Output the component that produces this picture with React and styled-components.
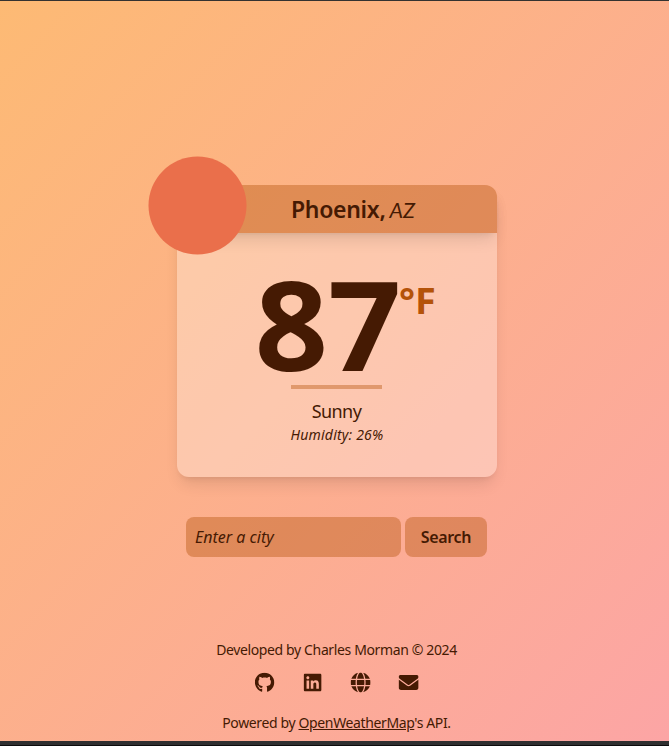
import React from "react";
import styled, { createGlobalStyle } from "styled-components";
import { FaGithub, FaLinkedin, FaGlobe, FaEnvelope } from "react-icons/fa6";

const GlobalStyle = createGlobalStyle`
  *, *::before, *::after { box-sizing: border-box; }
  body { margin: 0; background: #0c0c0d; }
`;

const Page = styled.div`
  display: flex;
  flex-direction: column;
  align-items: center;
  height: 745px;
  padding-top: 184px;
  border-top: 1px solid #343230;
  border-bottom: 4px solid #2f2f30;
  overflow: hidden;
  background: linear-gradient(to bottom right, #fdba74, #fca5a5) padding-box;
  color: #451a03;
  font-family: "Noto Sans", sans-serif;
`;

const Card = styled.section`
  position: relative;
  width: 320px;
  height: 292px;
  margin-left: 5px;
  border-radius: 12px;
  box-shadow: 0 10px 15px -3px rgba(0, 0, 0, 0.1), 0 4px 6px -4px rgba(0, 0, 0, 0.1);
`;

const Sun = styled.div`
  position: absolute;
  top: -29px;
  left: -29px;
  width: 98px;
  height: 98px;
  border-radius: 50%;
  background: #ea6f4b;
  transform: translate(0.5px, 0.6px);
`;

const CardHeader = styled.header`
  position: relative;
  display: flex;
  align-items: center;
  justify-content: center;
  gap: 4px;
  height: 48px;
  padding-left: 32px;
  border-radius: 12px 12px 0 0;
  background: rgba(180, 83, 9, 0.4);
  box-shadow: 0 10px 15px -3px rgba(0, 0, 0, 0.1), 0 4px 6px -4px rgba(0, 0, 0, 0.1);
`;

const City = styled.h1`
  margin: 0;
  font-size: 23px;
  line-height: 32px;
  font-weight: 600;
  letter-spacing: -0.3px;
`;

const Region = styled.span`
  margin-top: 1px;
  font-family: Lato, sans-serif;
  font-size: 21.5px;
  line-height: 28px;
  font-style: italic;
  font-weight: 400;
`;

const CardBody = styled.div`
  display: flex;
  flex-direction: column;
  align-items: center;
  height: 244px;
  padding-top: 32px;
  border-radius: 0 0 12px 12px;
  background: rgba(255, 255, 255, 0.3);
`;

const Temperature = styled.div`
  display: flex;
  align-items: flex-start;
  height: 120px;
  margin-left: 18px;
`;

const Degrees = styled.span`
  font-size: 124.5px;
  line-height: 115px;
  font-weight: 700;
  transform: scaleX(1.03);
  transform-origin: right;
`;

const Unit = styled.span`
  margin: 16px 0 0 -2px;
  color: #b45309;
  font-size: 35px;
  line-height: 40px;
  font-weight: 700;
  transform: scaleX(1.08);
  transform-origin: left;
`;

const Divider = styled.hr`
  width: 91px;
  height: 4px;
  margin: 0 2px 0 0;
  border: 0;
  background: rgba(180, 83, 9, 0.4);
`;

const Condition = styled.p`
  margin: 8px 1px 0 0;
  font-size: 18px;
  line-height: 28px;
  letter-spacing: -0.6px;
`;

const Humidity = styled.p`
  margin: 0;
  font-size: 14px;
  line-height: 20px;
  font-style: italic;
  letter-spacing: 0.2px;
`;

const SearchForm = styled.form`
  display: flex;
  gap: 4px;
  margin: 40px 0 0 4px;
`;

const CityInput = styled.input`
  width: 215px;
  height: 40px;
  padding: 0 9px;
  border: 0;
  border-radius: 8px;
  background: rgba(180, 83, 9, 0.4);
  color: #451a03;
  font: italic 16px/24px "Noto Sans", sans-serif;
  &::placeholder { color: #451a03; opacity: 1; }
`;

const SearchButton = styled.button`
  width: 82px;
  height: 40px;
  padding: 0;
  border: 0;
  border-radius: 8px;
  background: rgba(180, 83, 9, 0.4);
  color: #451a03;
  font: 600 16px/24px "Noto Sans", sans-serif;
  letter-spacing: -0.35px;
`;

const Footer = styled.footer`
  display: flex;
  flex-direction: column;
  align-items: center;
  margin: 83px 0 0 4px;
  font-size: 14px;
  line-height: 20px;
`;

const Note = styled.p`
  margin: 0;
  white-space: nowrap;
  letter-spacing: -0.37px;
`;

const Socials = styled.nav`
  display: flex;
  gap: 28px;
  margin: 12px 0 21px;
`;

const IconLink = styled.a`
  display: flex;
  justify-content: center;
  width: 20px;
  height: 20px;
  color: inherit;
  font-size: 20px;
  transform: translate(-0.4px, 0.5px);
`;

const TextLink = styled.a`
  color: inherit;
  text-decoration: underline;
`;

export default function App() {
  return (
    <>
      <GlobalStyle />
      <Page>
        <Card>
          <CardHeader>
            <City>Phoenix,</City>
            <Region>AZ</Region>
          </CardHeader>
          <CardBody>
            <Temperature>
              <Degrees>87</Degrees>
              <Unit>°F</Unit>
            </Temperature>
            <Divider />
            <Condition>Sunny</Condition>
            <Humidity>Humidity: 26%</Humidity>
          </CardBody>
          <Sun />
        </Card>
        <SearchForm onSubmit={(e) => e.preventDefault()}>
          <CityInput placeholder="Enter a city" />
          <SearchButton>Search</SearchButton>
        </SearchForm>
        <Footer>
          <Note>Developed by Charles Morman © 2024</Note>
          <Socials>
            <IconLink href="#" aria-label="GitHub"><FaGithub /></IconLink>
            <IconLink href="#" aria-label="LinkedIn"><FaLinkedin /></IconLink>
            <IconLink href="#" aria-label="Website"><FaGlobe /></IconLink>
            <IconLink href="#" aria-label="Email"><FaEnvelope /></IconLink>
          </Socials>
          <Note>
            Powered by <TextLink href="#">OpenWeatherMap</TextLink>'s API.
          </Note>
        </Footer>
      </Page>
    </>
  );
}
